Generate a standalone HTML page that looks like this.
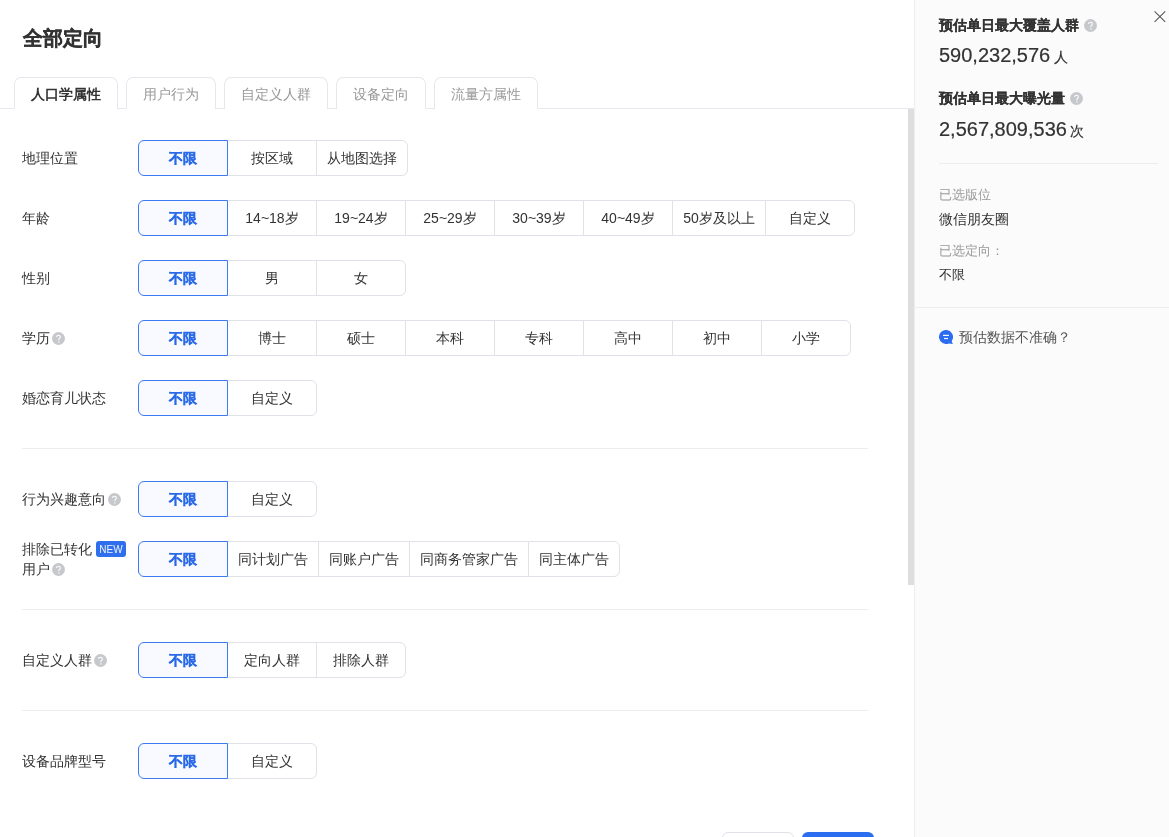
<!DOCTYPE html>
<html><head><meta charset="utf-8">
<style>
*{box-sizing:border-box;margin:0;padding:0}
html{background:#fff}body{will-change:transform;width:1169px;height:837px;overflow:hidden;background:#fff;font-family:"Liberation Sans",sans-serif;color:#333}
.a{position:absolute}
.t{position:absolute;white-space:nowrap;line-height:20px;font-size:14px}
#title{left:23px;top:25px;font-size:20px;line-height:26px;font-weight:bold;color:#333;-webkit-text-stroke:0.3px #333}
.tabline{left:0;top:108px;width:914px;height:1px;background:#e6e8ee}
.tab{position:absolute;top:77px;height:32px;border:1px solid #e6e8ee;border-bottom:none;border-radius:7px 7px 0 0;background:#fff;font-size:14px;line-height:32px;text-align:center;color:#999}
.tab.on{color:#333;font-weight:bold;height:32px}
.grp{position:absolute;left:138px;height:36px;display:flex}
.b{height:36px;border:1px solid #dfe2e8;margin-left:-1px;font-size:14px;line-height:34px;text-align:center;color:#333;white-space:nowrap;background:#fff}
.b.on{border-color:#3d7bf0;color:#2a6ae8;font-weight:bold;background:#f8faff;-webkit-text-stroke:0.25px #2a6ae8;border-radius:6px 0 0 6px;margin-left:0;position:relative;z-index:1}
.b.last{border-radius:0 6px 6px 0}
.lbl{position:absolute;left:22px;font-size:14px;line-height:20px;color:#333;white-space:nowrap}
.hr{position:absolute;left:22px;width:846px;height:1px;background:#ebedf0}
.new{display:inline-block;background:#2f6fed;color:#eef3ff;font-size:10px;line-height:16px;height:16px;padding-top:1px;width:30px;text-align:center;border-radius:3px;vertical-align:top;margin-top:2px;margin-left:4px}
.qi{display:inline-block;vertical-align:top;margin-top:4px;margin-left:2px}
.q{display:inline-block;width:13px;height:13px;border-radius:50%;background:#c9cbd0;color:#fff;font-size:10px;line-height:13px;text-align:center;font-weight:bold;vertical-align:middle}
#side{position:absolute;left:914px;top:0;width:255px;height:837px;background:#fbfbfb;border-left:1px solid #eceef2}
#scroll{left:908px;top:109px;width:6px;height:476px;background:#dedede}
</style></head><body>
<div id="title" class="a">全部定向</div>

<div class="a tabline"></div>
<div class="tab on" style="left:14px;width:104px;height:32px">人口学属性</div>
<div class="tab" style="left:126px;width:90px">用户行为</div>
<div class="tab" style="left:224px;width:104px">自定义人群</div>
<div class="tab" style="left:336px;width:90px">设备定向</div>
<div class="tab" style="left:434px;width:104px">流量方属性</div>

<!-- rows -->
<div class="lbl" style="top:148px">地理位置</div>
<div class="grp" style="top:140px">
  <div class="b on" style="width:90px">不限</div>
  <div class="b" style="width:90px">按区域</div>
  <div class="b last" style="width:92px">从地图选择</div>
</div>

<div class="lbl" style="top:208px">年龄</div>
<div class="grp" style="top:200px">
  <div class="b on" style="width:90px">不限</div>
  <div class="b" style="width:90px">14~18岁</div>
  <div class="b" style="width:90px">19~24岁</div>
  <div class="b" style="width:90px">25~29岁</div>
  <div class="b" style="width:90px">30~39岁</div>
  <div class="b" style="width:90px">40~49岁</div>
  <div class="b" style="width:94px">50岁及以上</div>
  <div class="b last" style="width:90px">自定义</div>
</div>

<div class="lbl" style="top:268px">性别</div>
<div class="grp" style="top:260px">
  <div class="b on" style="width:90px">不限</div>
  <div class="b" style="width:90px">男</div>
  <div class="b last" style="width:90px">女</div>
</div>

<div class="lbl" style="top:328px">学历<svg class="qi" width="13" height="13" viewBox="0 0 13 13"><circle cx="6.5" cy="6.5" r="6.5" fill="#c6c8cc"/><path d="M4.6 5.1C4.6 3.9 5.4 3.2 6.5 3.2C7.6 3.2 8.4 3.9 8.4 4.9C8.4 6.1 6.9 6.3 6.9 7.6V8.2" fill="none" stroke="#fff" stroke-width="1.1"/><circle cx="6.9" cy="9.9" r="0.7" fill="#fff"/></svg></div>
<div class="grp" style="top:320px">
  <div class="b on" style="width:90px">不限</div>
  <div class="b" style="width:90px">博士</div>
  <div class="b" style="width:90px">硕士</div>
  <div class="b" style="width:90px">本科</div>
  <div class="b" style="width:90px">专科</div>
  <div class="b" style="width:90px">高中</div>
  <div class="b" style="width:90px">初中</div>
  <div class="b last" style="width:90px">小学</div>
</div>

<div class="lbl" style="top:388px">婚恋育儿状态</div>
<div class="grp" style="top:380px">
  <div class="b on" style="width:90px">不限</div>
  <div class="b last" style="width:90px">自定义</div>
</div>

<div class="hr" style="top:448px"></div>

<div class="lbl" style="top:489px">行为兴趣意向<svg class="qi" width="13" height="13" viewBox="0 0 13 13"><circle cx="6.5" cy="6.5" r="6.5" fill="#c6c8cc"/><path d="M4.6 5.1C4.6 3.9 5.4 3.2 6.5 3.2C7.6 3.2 8.4 3.9 8.4 4.9C8.4 6.1 6.9 6.3 6.9 7.6V8.2" fill="none" stroke="#fff" stroke-width="1.1"/><circle cx="6.9" cy="9.9" r="0.7" fill="#fff"/></svg></div>
<div class="grp" style="top:481px">
  <div class="b on" style="width:90px">不限</div>
  <div class="b last" style="width:90px">自定义</div>
</div>

<div class="lbl" style="top:539px">排除已转化<span class="new">NEW</span></div>
<div class="lbl" style="top:559px">用户<svg class="qi" width="13" height="13" viewBox="0 0 13 13"><circle cx="6.5" cy="6.5" r="6.5" fill="#c6c8cc"/><path d="M4.6 5.1C4.6 3.9 5.4 3.2 6.5 3.2C7.6 3.2 8.4 3.9 8.4 4.9C8.4 6.1 6.9 6.3 6.9 7.6V8.2" fill="none" stroke="#fff" stroke-width="1.1"/><circle cx="6.9" cy="9.9" r="0.7" fill="#fff"/></svg></div>
<div class="grp" style="top:541px">
  <div class="b on" style="width:90px">不限</div>
  <div class="b" style="width:92px">同计划广告</div>
  <div class="b" style="width:92px">同账户广告</div>
  <div class="b" style="width:120px">同商务管家广告</div>
  <div class="b last" style="width:92px">同主体广告</div>
</div>

<div class="hr" style="top:609px"></div>

<div class="lbl" style="top:650px">自定义人群<svg class="qi" width="13" height="13" viewBox="0 0 13 13"><circle cx="6.5" cy="6.5" r="6.5" fill="#c6c8cc"/><path d="M4.6 5.1C4.6 3.9 5.4 3.2 6.5 3.2C7.6 3.2 8.4 3.9 8.4 4.9C8.4 6.1 6.9 6.3 6.9 7.6V8.2" fill="none" stroke="#fff" stroke-width="1.1"/><circle cx="6.9" cy="9.9" r="0.7" fill="#fff"/></svg></div>
<div class="grp" style="top:642px">
  <div class="b on" style="width:90px">不限</div>
  <div class="b" style="width:90px">定向人群</div>
  <div class="b last" style="width:90px">排除人群</div>
</div>

<div class="hr" style="top:710px"></div>

<div class="lbl" style="top:751px">设备品牌型号</div>
<div class="grp" style="top:743px">
  <div class="b on" style="width:90px">不限</div>
  <div class="b last" style="width:90px">自定义</div>
</div>

<div class="a" style="left:722px;top:832px;width:72px;height:30px;border:1px solid #dfe2e8;border-radius:6px;background:#fff"></div>
<div class="a" style="left:802px;top:832px;width:72px;height:30px;border-radius:6px;background:#2b6ef0"></div>

<div id="scroll" class="a"></div>

<div id="side">
  <div class="t" style="left:24px;top:15px;font-weight:bold;color:#333;-webkit-text-stroke:0.15px #333">预估单日最大覆盖人群<svg class="qi" style="margin-left:5px" width="13" height="13" viewBox="0 0 13 13"><circle cx="6.5" cy="6.5" r="6.5" fill="#c6c8cc"/><path d="M4.6 5.1C4.6 3.9 5.4 3.2 6.5 3.2C7.6 3.2 8.4 3.9 8.4 4.9C8.4 6.1 6.9 6.3 6.9 7.6V8.2" fill="none" stroke="#fff" stroke-width="1.1"/><circle cx="6.9" cy="9.9" r="0.7" fill="#fff"/></svg></div>
  <div class="t" style="left:24px;top:42px;font-size:20px;line-height:26px;color:#333;-webkit-text-stroke:0.2px #333">590,232,576<span style="font-size:14px;margin-left:4px">人</span></div>
  <div class="t" style="left:24px;top:88px;font-weight:bold;color:#333;-webkit-text-stroke:0.15px #333">预估单日最大曝光量<svg class="qi" style="margin-left:5px" width="13" height="13" viewBox="0 0 13 13"><circle cx="6.5" cy="6.5" r="6.5" fill="#c6c8cc"/><path d="M4.6 5.1C4.6 3.9 5.4 3.2 6.5 3.2C7.6 3.2 8.4 3.9 8.4 4.9C8.4 6.1 6.9 6.3 6.9 7.6V8.2" fill="none" stroke="#fff" stroke-width="1.1"/><circle cx="6.9" cy="9.9" r="0.7" fill="#fff"/></svg></div>
  <div class="t" style="left:24px;top:116px;font-size:20px;line-height:26px;color:#333;-webkit-text-stroke:0.2px #333">2,567,809,536<span style="font-size:14px;margin-left:3px">次</span></div>
  <div class="a" style="left:24px;top:163px;width:219px;height:1px;background:#ebedf0"></div>
  <div class="t" style="left:24px;top:185px;color:#999;font-size:13px">已选版位</div>
  <div class="t" style="left:24px;top:209px;color:#333">微信朋友圈</div>
  <div class="t" style="left:24px;top:241px;color:#999;font-size:13px">已选定向：</div>
  <div class="t" style="left:24px;top:265px;color:#333;font-size:13px">不限</div>
  <div class="a" style="left:0;top:307px;width:255px;height:1px;background:#ebedf0"></div>
  <svg class="a" style="left:24px;top:330px" width="14" height="14" viewBox="0 0 14 14"><path d="M13.5 9.6A7 7 0 1 0 9.8 13.4L14 14L12.9 12.3Q12.6 11 13.5 9.6Z" fill="#2b6cf0"/><rect x="4" y="4.8" width="6" height="1.2" fill="#fff"/><rect x="5" y="7.9" width="4" height="1.2" fill="#fff"/></svg>
  <div class="t" style="left:44px;top:327px;color:#555">预估数据不准确？</div>
  <svg class="a" style="left:239px;top:10px" width="13" height="13" viewBox="0 0 13 13"><path d="M0.6 1.3L11.2 11.9M11.2 1.3L0.6 11.9" stroke="#555" stroke-width="1.05"/></svg>
</div>
</body></html>
